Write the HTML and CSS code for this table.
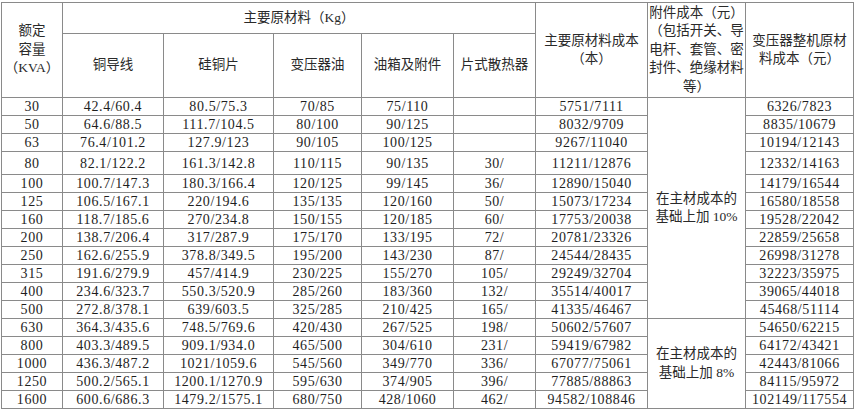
FILE: index.html
```html
<!DOCTYPE html>
<html lang="zh-CN">
<head>
<meta charset="utf-8">
<title>变压器原材料成本</title>
<link rel="stylesheet" href="styles.css">
</head>
<body>
<table class="cost">
  <colgroup>
    <col class="c1"><col class="c2"><col class="c3"><col class="c4"><col class="c5">
    <col class="c6"><col class="c7"><col class="c8"><col class="c9">
  </colgroup>
  <thead>
    <tr class="h1">
      <th rowspan="2">额定<br>容量<br>（KVA）</th>
      <th colspan="5">主要原材料（Kg）</th>
      <th rowspan="2">主要原材料成本<br>（本）</th>
      <th rowspan="2" class="acc">附件成本（元）<br>（包括开关、导<br>电杆、套管、密<br>封件、绝缘材料<br>等）</th>
      <th rowspan="2">变压器整机原材<br>料成本（元）</th>
    </tr>
    <tr class="h2">
      <th>铜导线</th><th>硅铜片</th><th>变压器油</th><th>油箱及附件</th><th>片式散热器</th>
    </tr>
  </thead>
  <tbody>
    <tr><td>30</td><td>42.4/60.4</td><td>80.5/75.3</td><td>70/85</td><td>75/110</td><td></td><td>5751/7111</td><td rowspan="12" class="note">在主材成本的<br>基础上加 10%</td><td>6326/7823</td></tr>
    <tr><td>50</td><td>64.6/88.5</td><td>111.7/104.5</td><td>80/100</td><td>90/125</td><td></td><td>8032/9709</td><td>8835/10679</td></tr>
    <tr><td>63</td><td>76.4/101.2</td><td>127.9/123</td><td>90/105</td><td>100/125</td><td></td><td>9267/11040</td><td>10194/12143</td></tr>
    <tr class="tall"><td>80</td><td>82.1/122.2</td><td>161.3/142.8</td><td>110/115</td><td>90/135</td><td>30/</td><td>11211/12876</td><td>12332/14163</td></tr>
    <tr><td>100</td><td>100.7/147.3</td><td>180.3/166.4</td><td>120/125</td><td>99/145</td><td>36/</td><td>12890/15040</td><td>14179/16544</td></tr>
    <tr><td>125</td><td>106.5/167.1</td><td>220/194.6</td><td>135/135</td><td>120/160</td><td>50/</td><td>15073/17234</td><td>16580/18558</td></tr>
    <tr><td>160</td><td>118.7/185.6</td><td>270/234.8</td><td>150/155</td><td>120/185</td><td>60/</td><td>17753/20038</td><td>19528/22042</td></tr>
    <tr><td>200</td><td>138.7/206.4</td><td>317/287.9</td><td>175/170</td><td>133/195</td><td>72/</td><td>20781/23326</td><td>22859/25658</td></tr>
    <tr><td>250</td><td>162.6/255.9</td><td>378.8/349.5</td><td>195/200</td><td>143/230</td><td>87/</td><td>24544/28435</td><td>26998/31278</td></tr>
    <tr><td>315</td><td>191.6/279.9</td><td>457/414.9</td><td>230/225</td><td>155/270</td><td>105/</td><td>29249/32704</td><td>32223/35975</td></tr>
    <tr><td>400</td><td>234.6/323.7</td><td>550.3/520.9</td><td>285/260</td><td>183/360</td><td>132/</td><td>35514/40017</td><td>39065/44018</td></tr>
    <tr><td>500</td><td>272.8/378.1</td><td>639/603.5</td><td>325/285</td><td>210/425</td><td>165/</td><td>41335/46467</td><td>45468/51114</td></tr>
    <tr><td>630</td><td>364.3/435.6</td><td>748.5/769.6</td><td>420/430</td><td>267/525</td><td>198/</td><td>50602/57607</td><td rowspan="6" class="note">在主材成本的<br>基础上加 8%</td><td>54650/62215</td></tr>
    <tr><td>800</td><td>403.3/489.5</td><td>909.1/934.0</td><td>465/500</td><td>304/610</td><td>231/</td><td>59419/67982</td><td>64172/43421</td></tr>
    <tr><td>1000</td><td>436.3/487.2</td><td>1021/1059.6</td><td>545/560</td><td>349/770</td><td>336/</td><td>67077/75061</td><td>42443/81066</td></tr>
    <tr><td>1250</td><td>500.2/565.1</td><td>1200.1/1270.9</td><td>595/630</td><td>374/905</td><td>396/</td><td>77885/88863</td><td>84115/95972</td></tr>
    <tr><td>1600</td><td>600.6/686.3</td><td>1479.2/1575.1</td><td>680/750</td><td>428/1060</td><td>462/</td><td>94582/108846</td><td>102149/117554</td></tr>
  </tbody>
</table>
</body>
</html>
```
FILE: styles.css
```css
html, body {
  margin: 0;
  padding: 0;
  background: #ffffff;
}
body {
  padding: 2px 0 0 1px;
  font-family: "Liberation Serif", "Noto Sans CJK SC", serif;
  color: #1e1e1e;
}
.cost {
  border-collapse: collapse;
  table-layout: fixed;
  width: 853px;
  font-size: 14px;
}
.c1 { width: 61px; }
.c2 { width: 101px; }
.c3 { width: 110px; }
.c4 { width: 88px; }
.c5 { width: 92px; }
.c6 { width: 82px; }
.c7 { width: 112px; }
.c8 { width: 98px; }
.c9 { width: 108px; }
.cost th, .cost td {
  border: 1px solid #8a8a8a;
  padding: 0;
  text-align: center;
  vertical-align: middle;
  overflow: hidden;
}
.cost th {
  font-weight: normal;
  font-size: 13.5px;
  line-height: 18.5px;
  font-family: "Liberation Serif", "Noto Sans CJK SC", serif;
  color: #2a2a2a;
}
.h1 th { height: 30px; }
.h2 th { height: 63px; }
.cost td {
  height: 17px;
  line-height: 17px;
  letter-spacing: 0.6px;
  white-space: nowrap;
}
.cost tr.tall td { height: 22px; }
.cost td.note {
  font-family: "Liberation Serif", "Noto Sans CJK SC", serif;
  font-size: 13.5px;
  line-height: 18.5px;
  letter-spacing: 0;
  color: #2a2a2a;
}
```
